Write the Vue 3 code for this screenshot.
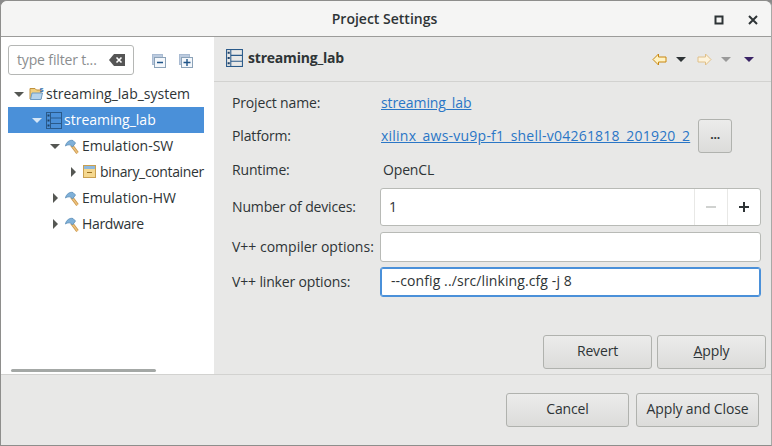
<script setup>
const rows = [
  { text: 'streaming_lab_system', indent: 2, arrow: 'down', icon: 'folder' },
  { text: 'streaming_lab', indent: 20, arrow: 'down', icon: 'project', selected: true },
  { text: 'Emulation-SW', indent: 38, arrow: 'down', icon: 'hammer' },
  { text: 'binary_container', indent: 56, arrow: 'right', icon: 'box', tight: true },
  { text: 'Emulation-HW', indent: 38, arrow: 'right', icon: 'hammer' },
  { text: 'Hardware', indent: 38, arrow: 'right', icon: 'hammer', tight: true }
]
</script>

<template>
  <div class="window">
    <header class="titlebar">
      <span class="title">Project Settings</span>
      <div class="wm">
        <svg width="12" height="12" viewBox="0 0 12 12"><rect x="2.500" y="2.500" width="7" height="7" fill="none" stroke="#2e3436" stroke-width="2" /></svg>
        <svg width="12" height="12" viewBox="0 0 12 12"><path d="M2 2l8 8M10 2l-8 8" fill="none" stroke="#2e3436" stroke-width="2" /></svg>
      </div>
    </header>

    <div class="body">
      <aside class="side">
        <div class="filter-row">
          <div class="filter">
            <span class="placeholder">type filter t...</span>
            <svg width="16" height="12" viewBox="0 0 16 12"><path d="M5 0h11v12H5L0 6z" fill="#555" /><path d="M7.500 3.500l5 5M12.500 3.500l-5 5" stroke="#fff" stroke-width="1.600" /></svg>
          </div>
          <svg class="tool" width="14" height="14" viewBox="0 0 14 14"><rect x="0.500" y="0.500" width="10" height="10" fill="#bccbdf" stroke="#a9bbd2" /><rect x="2.500" y="3.500" width="11" height="10" fill="#f4f7fb" stroke="#8ba2b8" /><path d="M5 8.500h6" stroke="#1f5488" stroke-width="1.400" /></svg>
          <svg class="tool second" width="14" height="14" viewBox="0 0 14 14"><rect x="0.500" y="0.500" width="10" height="10" fill="#bccbdf" stroke="#a9bbd2" /><rect x="2.500" y="3.500" width="11" height="10" fill="#f4f7fb" stroke="#8ba2b8" /><path d="M4.500 8.500h7M8 5v7" stroke="#1f5488" stroke-width="1.400" /></svg>
        </div>

        <div class="tree">
          <div v-for="r in rows" :key="r.text" class="node" :class="{ selected: r.selected, tight: r.tight }" :style="{ paddingLeft: r.indent + 'px' }">
            <span class="arrow-box"><span class="arrow" :class="r.arrow"></span></span>
            <span class="icon-box">
              <svg v-if="r.icon === 'folder'" class="ico folder" width="17" height="16" viewBox="0 0 17 16">
                <path d="M1 2.500h5l1.500 1.500H12v9H1z" fill="#f0cf80" stroke="#c0913c" />
                <path d="M3 7h10.500l-1.500 6.500H1.500z" fill="#b5d3ec" stroke="#6f9cc4" />
                <text x="10.500" y="6" font-size="7.500" font-weight="700" fill="#2c6aa6" font-family="'Liberation Sans', sans-serif">s</text>
              </svg>
              <svg v-else-if="r.icon === 'project'" class="ico" width="16" height="17" viewBox="0 0 16 17">
                <rect x="0.500" y="0.500" width="15" height="16" fill="none" stroke="#2a5a8a" />
                <path d="M4.500 1v15M5 6h10.500M5 11.500h10.500" stroke="#2a5a8a" />
                <path d="M1.500 2.500h2v2h-2zM1.500 7.500h2v2h-2zM1.500 12.500h2v2h-2z" fill="#1d4066" />
              </svg>
              <svg v-else-if="r.icon === 'hammer'" class="ico shift" width="14" height="15" viewBox="0 0 14 15">
                <path d="M6.500 6l6 8" stroke="#c9974b" stroke-width="3" />
                <path d="M6.500 6l6 8" stroke="#eec27e" stroke-width="1.400" />
                <path d="M0.500 7C1 3.500 4.500 0.500 8 1.500l2.500 2.500-3 4-2-2C3.500 5.500 2 6 0.500 7z" fill="#7fb0d8" stroke="#5a8db8" stroke-width="0.800" />
              </svg>
              <svg v-else class="ico shift" width="14" height="14" viewBox="0 0 14 14">
                <rect x="0.500" y="0.500" width="12" height="12" fill="#f5d88f" stroke="#c9a050" />
                <rect x="1" y="1" width="11" height="3" fill="#8fb8dc" />
                <path d="M4 7.500h5" stroke="#9a6f20" stroke-width="1.200" />
              </svg>
            </span>
            <span class="label">{{ r.text }}</span>
          </div>
        </div>
        <div class="hscroll"></div>
      </aside>

      <main class="main">
        <div class="main-head">
          <svg width="17" height="18" viewBox="0 0 16 17">
            <rect x="0.500" y="0.500" width="15" height="16" fill="none" stroke="#2a5a8a" />
            <path d="M4.500 1v15M5 6h10.500M5 11.500h10.500" stroke="#2a5a8a" />
            <path d="M1.500 2.500h2v2h-2zM1.500 7.500h2v2h-2zM1.500 12.500h2v2h-2z" fill="#1d4066" />
          </svg>
          <span class="main-title">streaming_lab</span>
          <div class="nav">
            <svg width="15" height="13" viewBox="0 0 15 13"><path d="M6.500 1L1 6.500 6.500 12V9h7.500V4H6.500z" fill="#fff3c4" stroke="#c8860f" /></svg>
            <span class="caret dark"></span>
            <svg class="fwd" width="15" height="13" viewBox="0 0 15 13"><path d="M8.500 1L14 6.500 8.500 12V9H1V4h7.500z" fill="#fdf3dc" stroke="#e0c088" /></svg>
            <span class="caret grey"></span>
            <span class="caret purple"></span>
          </div>
        </div>

        <div class="form">
          <div class="row r1">
            <span class="lbl">Project name:</span>
            <a class="link short">streaming_lab</a>
          </div>
          <div class="row r2">
            <span class="lbl">Platform:</span>
            <a class="link long">xilinx_aws-vu9p-f1_shell-v04261818_201920_2</a>
            <button class="btn browse">...</button>
          </div>
          <div class="row r3">
            <span class="lbl">Runtime:</span>
            <span class="val">OpenCL</span>
          </div>
          <div class="row r4">
            <span class="lbl">Number of devices:</span>
            <div class="spin">
              <span class="spin-val">1</span>
              <span class="spin-btn off"><i class="minus"></i></span>
              <span class="spin-btn"><i class="minus dark"></i><i class="vert"></i></span>
            </div>
          </div>
          <div class="row r5">
            <span class="lbl">V++ compiler options:</span>
            <div class="input"></div>
          </div>
          <div class="row r6">
            <span class="lbl">V++ linker options:</span>
            <div class="input focus">--config ../src/linking.cfg -j 8</div>
          </div>
        </div>

        <div class="actions">
          <button class="btn act">Revert</button>
          <button class="btn act"><span><u>A</u>pply</span></button>
        </div>
      </main>
    </div>

    <footer class="footer">
      <button class="btn foot">Cancel</button>
      <button class="btn foot">Apply and Close</button>
    </footer>
  </div>
</template>

<style>
html, body { margin: 0; background: #8a8a8a; }
</style>

<style scoped>
.window {
  width: 772px;
  height: 446px;
  box-sizing: border-box;
  display: flex;
  flex-direction: column;
  background: #e8e8e7;
  border: 1px solid #8e8e8c;
  border-right-color: #a8a8a6;
  border-radius: 7px 7px 0 0;
  overflow: hidden;
  font-family: "Open Sans", "Noto Sans", sans-serif;
  font-size: 14px;
  letter-spacing: -0.15px;
  color: #2e3436;
}
.titlebar {
  height: 36px;
  flex: none;
  box-sizing: border-box;
  border-bottom: 1px solid #9c9c9a;
  background: #f5f5f4;
  display: flex;
  align-items: center;
  justify-content: center;
  position: relative;
}
.title { font-weight: 600; font-size: 14px; color: #2e3436; letter-spacing: 0; margin-left: -3px; }
.wm {
  position: absolute;
  right: 12px;
  top: 13px;
  display: flex;
  gap: 22px;
}
.wm svg { display: block; }
.body { flex: 1; display: flex; min-height: 0; }
.side {
  width: 213px;
  flex: none;
  background: #fff;
  display: flex;
  flex-direction: column;
  position: relative;
}
.filter-row {
  height: 44px;
  box-sizing: border-box;
  padding: 8px 0 0 7px;
  display: flex;
  align-items: flex-start;
}
.filter {
  width: 126px;
  height: 30px;
  box-sizing: border-box;
  border: 1px solid #b5b7b5;
  border-radius: 3px;
  padding: 0 8px;
  display: flex;
  align-items: center;
  justify-content: space-between;
}
.placeholder { color: #8b8e8f; padding-bottom: 2px; }
.tool { margin: 9px 0 0 18px; }
.tool.second { margin-left: 13px; }
.tree { flex: 1; padding-left: 7px; letter-spacing: 0; }
.node {
  height: 26px;
  width: 196px;
  box-sizing: border-box;
  display: flex;
  align-items: center;
  white-space: nowrap;
}
.node.tight { letter-spacing: -0.35px; }
.node.selected { background: #4a90d9; color: #fff; }
.label { padding-bottom: 2px; }
.arrow-box { width: 18px; flex: none; display: flex; justify-content: center; align-items: center; }
.icon-box { width: 18px; flex: none; display: flex; align-items: center; }
.arrow { width: 0; height: 0; flex: none; }
.arrow.down {
  border-left: 5px solid transparent;
  border-right: 5px solid transparent;
  border-top: 5px solid #555753;
}
.arrow.right {
  border-top: 5px solid transparent;
  border-bottom: 5px solid transparent;
  border-left: 5px solid #555753;
}
.selected .arrow.down { border-top-color: #d5e6f7; }
.ico { flex: none; display: block; }
.ico.shift { margin-left: 1px; }
.ico.folder { margin-left: 1px; }
.hscroll {
  position: absolute;
  left: 10px;
  bottom: 2px;
  width: 145px;
  height: 3px;
  background: #a4a8a6;
  border-radius: 2px;
}
.main { flex: 1; display: flex; flex-direction: column; min-width: 0; }
.main-head {
  height: 45px;
  flex: none;
  box-sizing: border-box;
  border-bottom: 1px solid #d2d2d0;
  padding: 0 17px 2px 12px;
  display: flex;
  align-items: center;
}
.main-title { font-weight: 700; margin-left: 5px; letter-spacing: -0.2px; padding-bottom: 2px; }
.nav { margin-left: auto; margin-top: 3px; display: flex; align-items: center; }
.caret {
  width: 0;
  height: 0;
  margin-left: 9px;
  border-left: 5px solid transparent;
  border-right: 5px solid transparent;
  border-top: 5px solid #2e3436;
}
.caret.grey { border-top-color: #9a9a9a; }
.caret.purple { border-top-color: #3a2466; margin-left: 13px; }
.fwd { margin-left: 11px; }
.form { padding: 0 10px 0 18px; }
.row { display: flex; align-items: center; box-sizing: border-box; }
.lbl { width: 148px; flex: none; padding-bottom: 2px; }
.r5 .lbl { letter-spacing: 0; white-space: nowrap; }
.val { padding: 0 0 2px 3px; }
.r1 { height: 37px; padding-top: 5px; }
.r2 { height: 34px; }
.r3 { height: 35px; }
.r4 { height: 38px; }
.r5 { height: 30px; margin-top: 6px; }
.r6 { height: 30px; margin-top: 5px; }
.link { color: #2a76c6; text-decoration: underline; white-space: nowrap; padding: 0 0 2px 1px; }
.link.short { letter-spacing: -0.1px; }
.link.long { letter-spacing: 0.23px; }
.btn {
  box-sizing: border-box;
  border: 1px solid #b0b2ae;
  border-radius: 3px;
  background: linear-gradient(#ececeb, #dcdcda);
  font: inherit;
  letter-spacing: inherit;
  color: #2e3436;
  padding: 0 0 3px;
}
.browse { width: 34px; height: 34px; margin-left: 8px; font-weight: 700; font-size: 12px; }
.spin {
  width: 381px;
  height: 38px;
  box-sizing: border-box;
  border: 1px solid #b8bab6;
  border-radius: 3px;
  background: #fff;
  display: flex;
  align-items: center;
}
.spin-val { flex: 1; padding: 0 0 2px 8px; }
.spin-btn {
  width: 33px;
  height: 36px;
  box-sizing: border-box;
  border-left: 1px solid #e8e8e6;
  position: relative;
  display: block;
}
.minus {
  position: absolute;
  left: 11px;
  top: 17px;
  width: 10px;
  height: 2px;
  background: #d0d2d0;
}
.minus.dark { background: #2e3436; }
.vert {
  position: absolute;
  left: 15px;
  top: 13px;
  width: 2px;
  height: 10px;
  background: #2e3436;
}
.input {
  width: 381px;
  height: 30px;
  box-sizing: border-box;
  border: 1px solid #b8bab6;
  border-radius: 3px;
  background: #fff;
  padding-left: 10px;
  line-height: 26px;
}
.input.focus { border-color: #4a90d9; box-shadow: inset 0 0 0 1px #4a90d9; letter-spacing: 0.1px; }
.actions {
  margin-top: auto;
  padding: 0 5px 5px 0;
  display: flex;
  justify-content: flex-end;
  gap: 5px;
}
.act { width: 109px; height: 34px; }
.footer {
  height: 71px;
  flex: none;
  box-sizing: border-box;
  border-top: 1px solid #d2d2d0;
  padding: 18px 12px 0 0;
  display: flex;
  justify-content: flex-end;
  gap: 7px;
}
.foot { width: 123px; height: 34px; }
</style>
